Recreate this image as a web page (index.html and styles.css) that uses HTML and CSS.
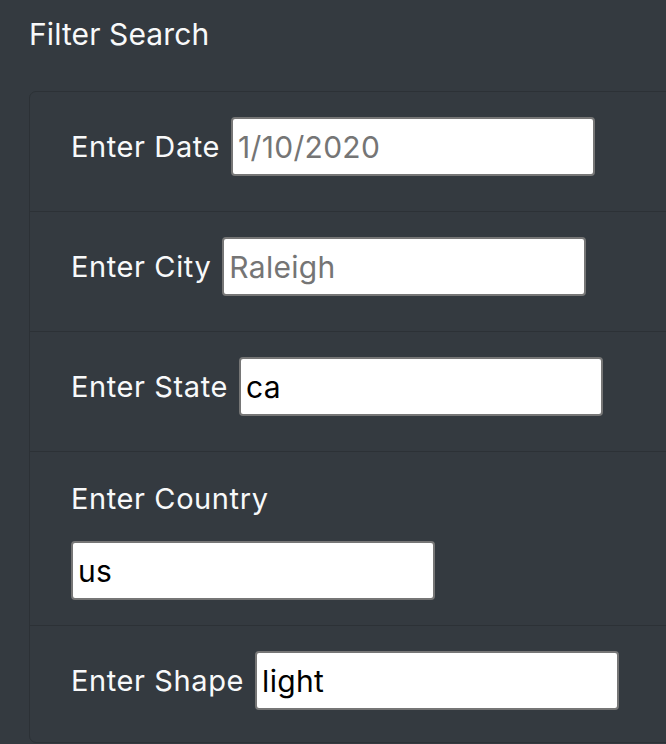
FILE: index.html
```html
<!DOCTYPE html>
<html lang="en">
<head>
<meta charset="utf-8">
<title>Filter Search</title>
<link rel="stylesheet" href="styles.css">
</head>
<body>
<div class="page">
  <h5 class="title">Filter Search</h5>
  <form class="panel">
    <ul class="list">
      <li class="item item-inline">
        <label class="label" for="datetime">Enter Date</label>
        <input class="field" id="datetime" type="text" placeholder="1/10/2020">
      </li>
      <li class="item item-inline">
        <label class="label" for="city">Enter City</label>
        <input class="field" id="city" type="text" placeholder="Raleigh">
      </li>
      <li class="item item-inline">
        <label class="label" for="state">Enter State</label>
        <input class="field" id="state" type="text" value="ca">
      </li>
      <li class="item item-stacked">
        <label class="label label-block" for="country">Enter Country</label>
        <input class="field" id="country" type="text" value="us">
      </li>
      <li class="item item-inline item-last">
        <label class="label" for="shape">Enter Shape</label>
        <input class="field" id="shape" type="text" value="light">
      </li>
    </ul>
  </form>
</div>
</body>
</html>
```
FILE: styles.css
```css
html, body {
  margin: 0;
  padding: 0;
  background: #343a40;
  overflow: hidden;
}
body {
  font-family: Inter, "Liberation Sans", sans-serif;
  color: #f8f9fa;
}
.page {
  padding: 0 0 0 29px;
}
.title {
  margin: 0;
  padding: 15px 0 0 0;
  height: 91px;
  box-sizing: border-box;
  font-size: 30px;
  font-weight: 400;
  letter-spacing: 0.1px;
  line-height: 38px;
  color: #f8f9fa;
}
.panel {
  width: 700px;
  margin: 0;
  border: 1px solid #2c3136;
  border-radius: 7px;
  background: #343a40;
}
.list {
  list-style: none;
  margin: 0;
  padding: 0;
}
.item {
  border-bottom: 1px solid #2c3136;
  padding: 25px 40px 35px 41px;
}
.item-inline {
  display: flex;
  align-items: center;
  gap: 11px;
}
.item-stacked {
  display: flex;
  flex-direction: column;
  align-items: flex-start;
  padding-bottom: 25px;
}
.item-last {
  border-bottom: 0;
  padding-bottom: 32px;
}
.label {
  font-size: 29px;
  letter-spacing: 0.6px;
  line-height: 43px;
  color: #f8f9fa;
  white-space: nowrap;
}
.label-block {
  margin-bottom: 21px;
}
.field {
  width: 364px;
  height: 59px;
  box-sizing: border-box;
  border: 2px solid #767676;
  border-radius: 4px;
  padding: 0 5px;
  background: #fff;
  font-family: Inter, "Liberation Sans", Arial, sans-serif;
  font-size: 30px;
  letter-spacing: 0.3px;
  color: #000;
}
.field::placeholder {
  color: #757575;
  opacity: 1;
}
```
